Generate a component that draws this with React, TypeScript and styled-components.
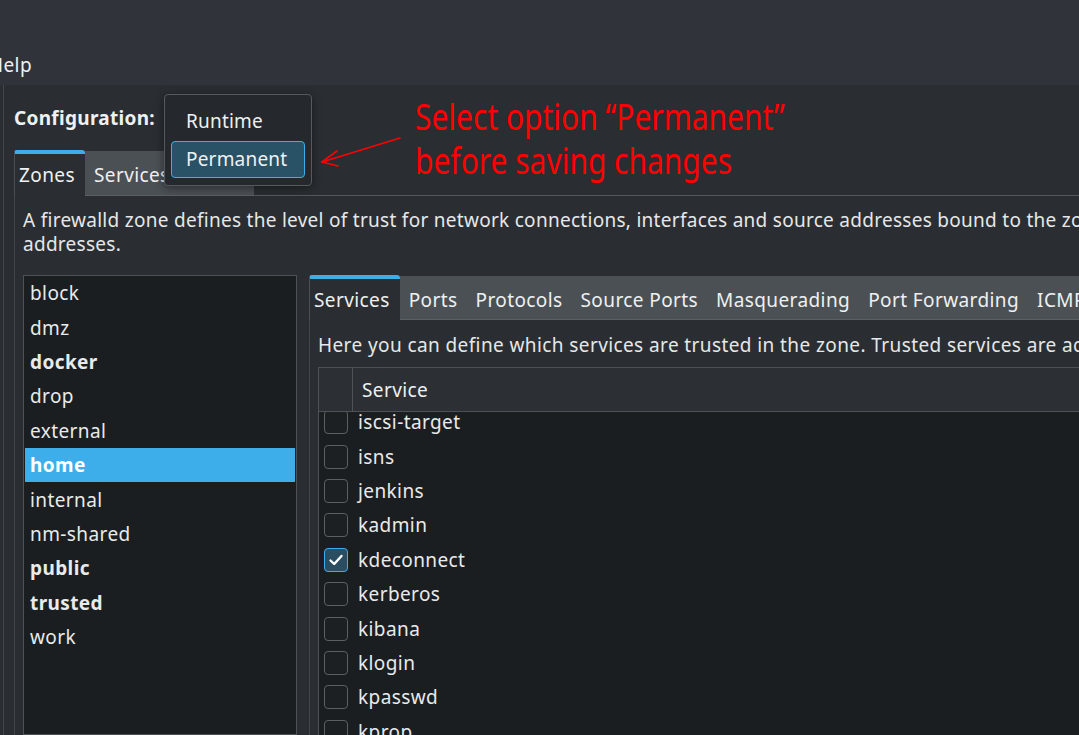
import React from 'react';
import styled, { createGlobalStyle, css } from 'styled-components';

const GlobalStyle = createGlobalStyle`
  html, body { margin: 0; padding: 0; background: #2a2e32; overflow: hidden; }
  body {
    font-family: "Noto Sans", "Open Sans", sans-serif;
    font-size: 19px;
    letter-spacing: 0.4px;
    color: #eff0f1;
  }
  * { box-sizing: border-box; }
`;

const Screen = styled.div`
  width: 1079px;
  height: 735px;
  overflow: hidden;
  position: relative;
  display: flex;
  flex-direction: column;
  background: #2a2e32;
`;

const TopBar = styled.div`
  height: 85px;
  flex-shrink: 0;
  background: #30343a;
  display: flex;
  flex-direction: column;
  justify-content: flex-end;
`;

const MenuBar = styled.div`
  height: 40px;
  display: flex;
  align-items: center;
`;

const MenuItem = styled.span`
  margin-left: -11px;
  color: #eff0f1;
`;

const Body = styled.div`
  flex: 1;
  min-height: 0;
  display: flex;
  padding-left: 3px;
`;

const Content = styled.div`
  flex: 1;
  min-width: 0;
  border-left: 1px solid #43474c;
  padding-left: 10px;
  display: flex;
  flex-direction: column;
`;

const ConfigRow = styled.div`
  height: 65px;
  display: flex;
  align-items: center;
  padding-top: 1px;
`;

const ConfigLabel = styled.span`
  font-weight: 700;
  letter-spacing: 0.3px;
`;

const TabWidget = styled.div`
  display: flex;
  flex-direction: column;
  flex: 1;
  min-width: 0;
  min-height: 0;
`;

const TabBar = styled.div<{ $h: number }>`
  height: ${p => p.$h}px;
  display: flex;
  flex-shrink: 0;
`;

const Tab = styled.div<{ $active?: boolean }>`
  display: flex;
  align-items: center;
  padding: 3px 9px 0 9px;
  white-space: nowrap;
  color: #eff0f1;
  ${p =>
    p.$active
      ? css`
          background: #2a2e32;
          border-top: 4px solid #3daee9;
          border-left: 1px solid #4a4f54;
          border-radius: 3px 3px 0 0;
          padding: 0 10px 0 4px;
        `
      : css`
          background: #4b5055;
          border-top: 1px solid #4b5055;
          border-bottom: 1px solid #5a5f64;
          margin-top: 1px;
        `}
`;

const TabFill = styled.div<{ $shade?: boolean }>`
  flex: 1;
  border-bottom: 1px solid #54595e;
  ${p => p.$shade && css`background: #4b5055; margin-top: 1px; border-bottom-color: #5a5f64;`}
`;

const Pane = styled.div`
  flex: 1;
  min-height: 0;
  border-left: 1px solid #43474c;
  display: flex;
  flex-direction: column;
`;

const ZonePane = styled(Pane)`
  padding: 12px 0 0 8px;
`;

const Description = styled.div`
  line-height: 24px;
  white-space: nowrap;
  letter-spacing: 0.28px;
  color: #e6e7e8;
`;

const Split = styled.div`
  margin-top: 19px;
  flex: 1;
  min-height: 0;
  display: flex;
  gap: 12px;
`;

const ZoneList = styled.div`
  width: 274px;
  flex-shrink: 0;
  background: #1b1e20;
  border: 1px solid #4d5256;
  padding: 0 1px;
`;

const ZoneItem = styled.div<{ $bold?: boolean; $selected?: boolean }>`
  height: 34.4px;
  display: flex;
  align-items: center;
  padding-left: 5px;
  font-weight: ${p => (p.$bold ? 700 : 400)};
  color: #e9eaeb;
  ${p => p.$selected && css`background: #3daee9; color: #ffffff;`}
`;

const InnerTabs = styled(TabWidget)`
  min-width: 900px;
`;

const ServicePane = styled(Pane)`
  padding: 13px 0 0 8px;
`;

const Hint = styled.div`
  line-height: 24px;
  white-space: nowrap;
  color: #e6e7e8;
`;

const Table = styled.div`
  margin-top: 10px;
  flex: 1;
  min-height: 0;
  border: 1px solid #4d5256;
  border-bottom: none;
  display: flex;
  flex-direction: column;
  overflow: hidden;
`;

const HeaderRow = styled.div`
  height: 44px;
  flex-shrink: 0;
  display: flex;
  background: #2c3034;
  border-bottom: 1px solid #4d5256;
`;

const HeaderCell = styled.div<{ $w?: number }>`
  display: flex;
  align-items: center;
  padding-left: 9px;
  ${p => (p.$w ? css`width: ${p.$w}px; border-right: 1px solid #4d5256;` : css`flex: 1;`)}
`;

const TableBody = styled.div`
  flex: 1;
  min-height: 0;
  background: #1b1e20;
  overflow: hidden;
`;

const Rows = styled.div`
  margin-top: -7px;
`;

const Row = styled.div`
  height: 34.4px;
  display: flex;
  align-items: center;
`;

const CheckCell = styled.div`
  width: 34px;
  display: flex;
  align-items: center;
  padding-left: 5px;
`;

const Box = styled.div<{ $checked?: boolean }>`
  width: 24px;
  height: 24px;
  border-radius: 4px;
  border: 1.5px solid ${p => (p.$checked ? '#3daee9' : '#5b5f63')};
  background: ${p => (p.$checked ? '#2a4d62' : '#1d2023')};
  display: flex;
  align-items: center;
  justify-content: center;
`;

const NameCell = styled.div`
  padding-left: 5px;
  color: #e9eaeb;
`;

const Popup = styled.div`
  position: absolute;
  left: 164px;
  top: 94px;
  width: 148px;
  height: 92px;
  background: #25292d;
  border: 1px solid #555a5e;
  border-radius: 4px;
  padding: 7px 6px;
  box-shadow: 0 2px 10px rgba(0, 0, 0, 0.45);
  display: flex;
  flex-direction: column;
  gap: 1px;
  z-index: 5;
`;

const Option = styled.div<{ $selected?: boolean }>`
  height: 39px;
  display: flex;
  align-items: center;
  padding-left: 14px;
  border: 1px solid transparent;
  border-radius: 4px;
  color: #eff0f1;
  letter-spacing: 0.2px;
  ${p => p.$selected && css`background: #2a5266; border-color: #3daee9;`}
`;

const Note = styled.div`
  position: absolute;
  left: 415px;
  top: 94px;
  color: #ff0000;
  font-family: "Noto Sans", sans-serif;
  font-size: 37px;
  letter-spacing: 0;
  line-height: 44px;
  white-space: nowrap;
  transform: scaleX(0.81);
  transform-origin: left top;
  z-index: 6;
`;

const ArrowSvg = styled.svg`
  position: absolute;
  left: 310px;
  top: 125px;
  z-index: 6;
`;

const zones = [
  { n: 'block' },
  { n: 'dmz' },
  { n: 'docker', b: true },
  { n: 'drop' },
  { n: 'external' },
  { n: 'home', b: true, s: true },
  { n: 'internal' },
  { n: 'nm-shared' },
  { n: 'public', b: true },
  { n: 'trusted', b: true },
  { n: 'work' },
];

const services = [
  'iscsi-target',
  'isns',
  'jenkins',
  'kadmin',
  'kdeconnect',
  'kerberos',
  'kibana',
  'klogin',
  'kpasswd',
  'kprop',
];

const innerTabs = ['Ports', 'Protocols', 'Source Ports', 'Masquerading', 'Port Forwarding', 'ICMP Filter', 'Rich Rules', 'Interfaces', 'Sources'];

const Check = () => (
  <svg width="16" height="14" viewBox="0 0 16 14">
    <path d="M2.5 7.5 L6.2 11 L13.5 3" fill="none" stroke="#ffffff" strokeWidth="2.4" strokeLinecap="round" strokeLinejoin="round" />
  </svg>
);

export default function App() {
  return (
    <Screen>
      <GlobalStyle />
      <TopBar>
        <MenuBar>
          <MenuItem>Help</MenuItem>
        </MenuBar>
      </TopBar>
      <Body>
        <Content>
          <ConfigRow>
            <ConfigLabel>Configuration:</ConfigLabel>
          </ConfigRow>
          <TabWidget>
            <TabBar $h={46}>
              <Tab $active>Zones</Tab>
              <Tab>Services</Tab>
              <Tab>IPSets</Tab>
              <TabFill />
            </TabBar>
            <ZonePane>
              <Description>
                A firewalld zone defines the level of trust for network connections, interfaces and source addresses bound to the zone. The zone combines services, ports, protocols, masquerading, port/packet forwarding, icmp filters and rich rules. The zone can be bound to interfaces and source
                <br />
                addresses.
              </Description>
              <Split>
                <ZoneList>
                  {zones.map(z => (
                    <ZoneItem key={z.n} $bold={z.b} $selected={z.s}>
                      {z.n}
                    </ZoneItem>
                  ))}
                </ZoneList>
                <InnerTabs>
                  <TabBar $h={45}>
                    <Tab $active>Services</Tab>
                    {innerTabs.map(t => (
                      <Tab key={t}>{t}</Tab>
                    ))}
                    <TabFill $shade />
                  </TabBar>
                  <ServicePane>
                    <Hint>
                      Here you can define which services are trusted in the zone. Trusted services are accessible from all hosts and networks that can reach the machine from connections, interfaces and sources bound to this zone.
                    </Hint>
                    <Table>
                      <HeaderRow>
                        <HeaderCell $w={34} />
                        <HeaderCell>Service</HeaderCell>
                      </HeaderRow>
                      <TableBody>
                        <Rows>
                          {services.map(s => (
                            <Row key={s}>
                              <CheckCell>
                                <Box $checked={s === 'kdeconnect'}>{s === 'kdeconnect' && <Check />}</Box>
                              </CheckCell>
                              <NameCell>{s}</NameCell>
                            </Row>
                          ))}
                        </Rows>
                      </TableBody>
                    </Table>
                  </ServicePane>
                </InnerTabs>
              </Split>
            </ZonePane>
          </TabWidget>
        </Content>
      </Body>

      <Popup>
        <Option>Runtime</Option>
        <Option $selected>Permanent</Option>
      </Popup>

      <Note>
        Select option “Permanent”
        <br />
        before saving changes
      </Note>

      <ArrowSvg width="110" height="50" viewBox="0 0 110 50">
        <g fill="none" stroke="#ff0000" strokeWidth="1.6" strokeLinecap="round">
          <path d="M90 13 L12 37" />
          <path d="M12 37 L27 26" />
          <path d="M12 37 L28 41" />
        </g>
      </ArrowSvg>
    </Screen>
  );
}
